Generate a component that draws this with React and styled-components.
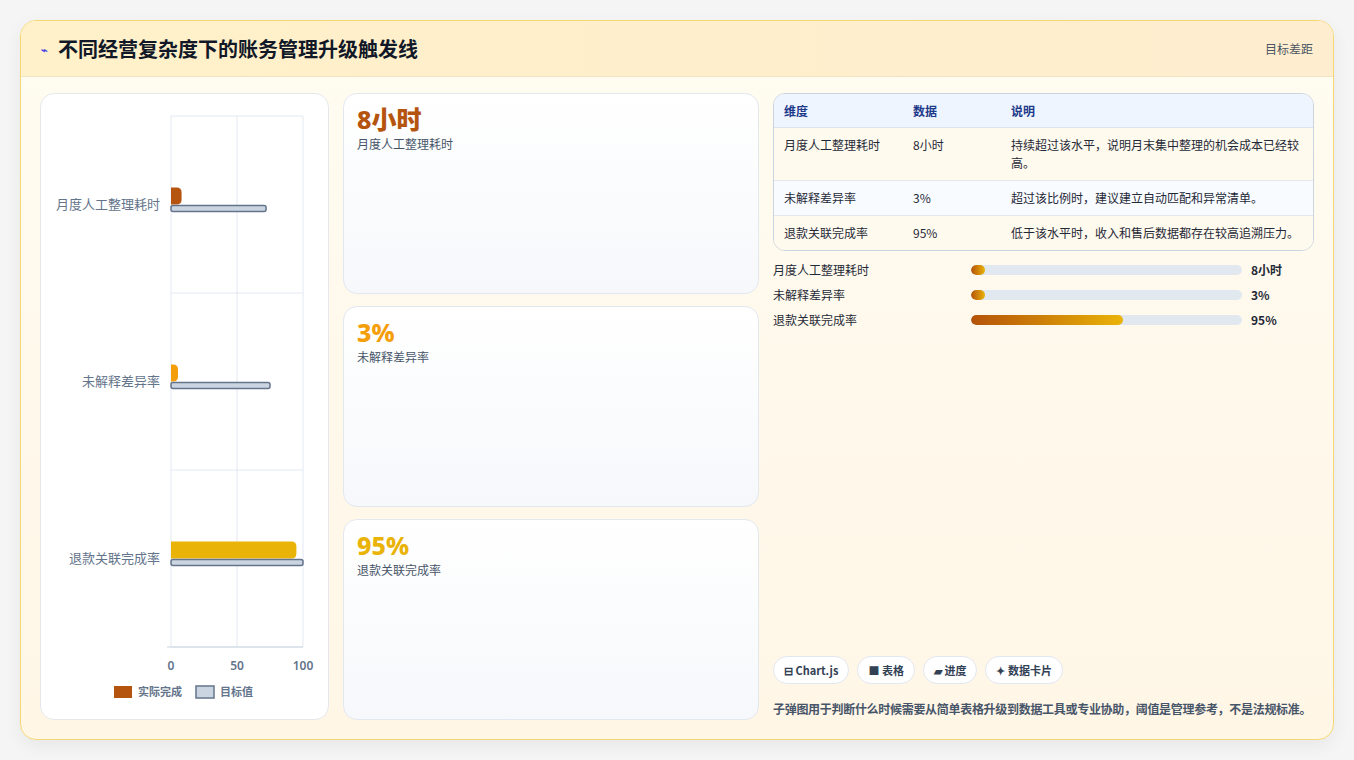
import React from "react";
import styled, { createGlobalStyle } from "styled-components";

const Global = createGlobalStyle`
  html, body { margin: 0; padding: 0; background: #f5f5f5; }
  body { font-family: "Noto Sans CJK SC", "Noto Sans", sans-serif; }
`;

const Page = styled.div`
  width: 1354px; height: 760px; box-sizing: border-box; padding: 20px 20px 20px 20px;
`;
const Card = styled.div`
  height: 720px; box-sizing: border-box; border: 1px solid #f5d774; border-radius: 16px;
  background: linear-gradient(180deg, #fffcf1 0%, #fff6e6 100%); overflow: hidden;
  display: flex; flex-direction: column; box-shadow: 0 6px 18px rgba(0,0,0,0.06);
`;
const Header = styled.div`
  height: 55px; flex: none; display: flex; align-items: center; justify-content: space-between;
  padding: 0 20px; background: linear-gradient(90deg, #fff1c9, #feedcf); border-bottom: 1px solid #efe3c2;
`;
const Title = styled.h1`
  margin: 0; font-size: 20px; font-weight: 700; color: #111827; display: flex; align-items: center; gap: 10px;
`;
const Icon = styled.span` font-size: 11px; color: #4f46e5; `;
const HeadRight = styled.span` font-size: 12px; color: #4b5563; `;
const Body = styled.div`
  flex: 1; display: grid; grid-template-columns: 289px 416px 1fr; gap: 14px; padding: 16px 19px 19px 19px; min-height: 0;
`;
const Panel = styled.div`
  background: #fff; border: 1px solid #e5e7eb; border-radius: 14px; overflow: hidden;
`;
const Cards = styled.div` display: grid; grid-template-rows: repeat(3, 1fr); gap: 12px; `;
const Stat = styled.div`
  border: 1px solid #e2e8f0; border-radius: 14px; padding: 9px 13px;
  background: linear-gradient(180deg, #ffffff, #f6f8fb);
`;
const StatVal = styled.div` font-size: 25px; font-weight: 800; color: ${p => p.c}; line-height: 32px; font-family: "Noto Sans", "Noto Sans CJK SC", sans-serif; `;
const StatLabel = styled.div` font-size: 12px; color: #475569; `;
const Right = styled.div` display: flex; flex-direction: column; `;
const Table = styled.table`
  width: 100%; border-collapse: separate; border-spacing: 0; border: 1px solid #cbd5e1; border-radius: 12px; overflow: hidden; font-size: 12px;
  th { background: #eef5ff; color: #1e3a8a; text-align: left; font-weight: 700; padding: 8px 10px; border-bottom: 1px solid #dbe3ee; height: 15px; }
  td { color: #1f2937; padding: 8px 10px; vertical-align: top; line-height: 18px; border-bottom: 1px solid #e5e7eb; }
  tr:nth-child(odd) td { background: #fffaee; }
  tr:nth-child(even) td { background: #f8fbff; }
  tr:last-child td { border-bottom: none; }
`;
const Bars = styled.div` display: flex; flex-direction: column; gap: 8px; margin-top: 10px; `;
const BarRow = styled.div` display: grid; grid-template-columns: 189px 271px 1fr; gap: 9px; align-items: center; font-size: 12px; color: #1f2937; height: 17px; `;
const Track = styled.div` height: 10px; background: #e2e8f0; border-radius: 6px; overflow: hidden; `;
const Fill = styled.div` height: 100%; border-radius: 6px; background: linear-gradient(90deg, #b45309, #eab308); `;
const Val = styled.span` font-weight: 700; `;
const Spacer = styled.div` flex: 1; `;
const Chips = styled.div` display: flex; gap: 8px; `;
const Chip = styled.span`
  font-size: 11px; font-weight: 700; color: #334155; background: #fff; border: 1px solid #e2e8f0; border-radius: 14px; padding: 6px 10px; line-height: 14px;
`;
const Note = styled.p` margin: 14px 0 0; font-size: 12px; line-height: 22px; color: #475569; font-weight: 600; letter-spacing: -0.3px; `;

const rows = [
  ["月度人工整理耗时", 8, 72, "#b5540f"],
  ["未解释差异率", 3, 75, "#f59e0b"],
  ["退款关联完成率", 95, 100, "#eab308"],
];

function Chart() {
  const x0 = 130, w = 132, top = 22, band = 177;
  const sx = v => x0 + (v / 100) * w;
  return (
    <svg width="289" height="627" viewBox="0 0 289 627" style={{ display: "block" }}>
      {[0, 50, 100].map(v => <line key={v} x1={sx(v)} x2={sx(v)} y1={top} y2={top + band * 3} stroke="#e2e8f0" />)}
      {[0, 1, 2, 3].map(i => <line key={i} x1={x0} x2={x0 + w} y1={top + band * i} y2={top + band * i} stroke="#e2e8f0" />)}
      <line x1={x0 - 4} x2={x0 + w} y1={top + band * 3} y2={top + band * 3} stroke="#cbd5e1" />
      {rows.map(([l, a, t, c], i) => {
        const cy = top + band * i + band / 2;
        const aw = Math.max(sx(a) - x0, 7);
        return (
          <g key={l}>
            <text x={119} y={cy + 4} textAnchor="end" fontSize="13" fill="#64748b">{l}</text>
            <path d={`M${x0} ${cy - 17} H${x0 + aw - 5} Q${x0 + aw} ${cy - 17} ${x0 + aw} ${cy - 12} V${cy - 5} Q${x0 + aw} ${cy} ${x0 + aw - 5} ${cy} H${x0} Z`} fill={c} />
            <rect x={x0} y={cy + 1} width={sx(t) - x0} height={6} rx={2} fill="#cbd5e1" stroke="#64748b" strokeWidth="1.5" />
          </g>
        );
      })}
      {[0, 50, 100].map(v => <text key={v} x={sx(v)} y={576} textAnchor="middle" fontSize="12" fontWeight="600" fill="#64748b" fontFamily="Noto Sans">{v}</text>)}
      <rect x={73} y={592} width={18} height={12} fill="#b5540f" />
      <text x={97} y={602} fontSize="11" fontWeight="600" fill="#64748b">实际完成</text>
      <rect x={155} y={592} width={18} height={12} fill="#cbd5e1" stroke="#64748b" strokeWidth="1.5" />
      <text x={179} y={602} fontSize="11" fontWeight="600" fill="#64748b">目标值</text>
    </svg>
  );
}

export default function App() {
  return (
    <Page>
      <Global />
      <Card>
        <Header>
          <Title><Icon>⌁</Icon>不同经营复杂度下的账务管理升级触发线</Title>
          <HeadRight>目标差距</HeadRight>
        </Header>
        <Body>
          <Panel><Chart /></Panel>
          <Cards>
            <Stat><StatVal c="#b5540f">8小时</StatVal><StatLabel>月度人工整理耗时</StatLabel></Stat>
            <Stat><StatVal c="#f59e0b">3%</StatVal><StatLabel>未解释差异率</StatLabel></Stat>
            <Stat><StatVal c="#eab308">95%</StatVal><StatLabel>退款关联完成率</StatLabel></Stat>
          </Cards>
          <Right>
            <Table>
              <colgroup><col style={{ width: 129 }} /><col style={{ width: 98 }} /><col /></colgroup>
              <thead><tr><th>维度</th><th>数据</th><th>说明</th></tr></thead>
              <tbody>
                <tr><td>月度人工整理耗时</td><td>8小时</td><td>持续超过该水平，说明月末集中整理的机会成本已经较高。</td></tr>
                <tr><td>未解释差异率</td><td>3%</td><td>超过该比例时，建议建立自动匹配和异常清单。</td></tr>
                <tr><td>退款关联完成率</td><td>95%</td><td>低于该水平时，收入和售后数据都存在较高追溯压力。</td></tr>
              </tbody>
            </Table>
            <Bars>
              <BarRow><span>月度人工整理耗时</span><Track><Fill style={{ width: "5%" }} /></Track><Val>8小时</Val></BarRow>
              <BarRow><span>未解释差异率</span><Track><Fill style={{ width: "5%" }} /></Track><Val>3%</Val></BarRow>
              <BarRow><span>退款关联完成率</span><Track><Fill style={{ width: "56%" }} /></Track><Val>95%</Val></BarRow>
            </Bars>
            <Spacer />
            <Chips>
              <Chip>⊟ Chart.js</Chip><Chip>■ 表格</Chip><Chip>▰ 进度</Chip><Chip>✦ 数据卡片</Chip>
            </Chips>
            <Note>子弹图用于判断什么时候需要从简单表格升级到数据工具或专业协助，阈值是管理参考，不是法规标准。</Note>
          </Right>
        </Body>
      </Card>
    </Page>
  );
}
